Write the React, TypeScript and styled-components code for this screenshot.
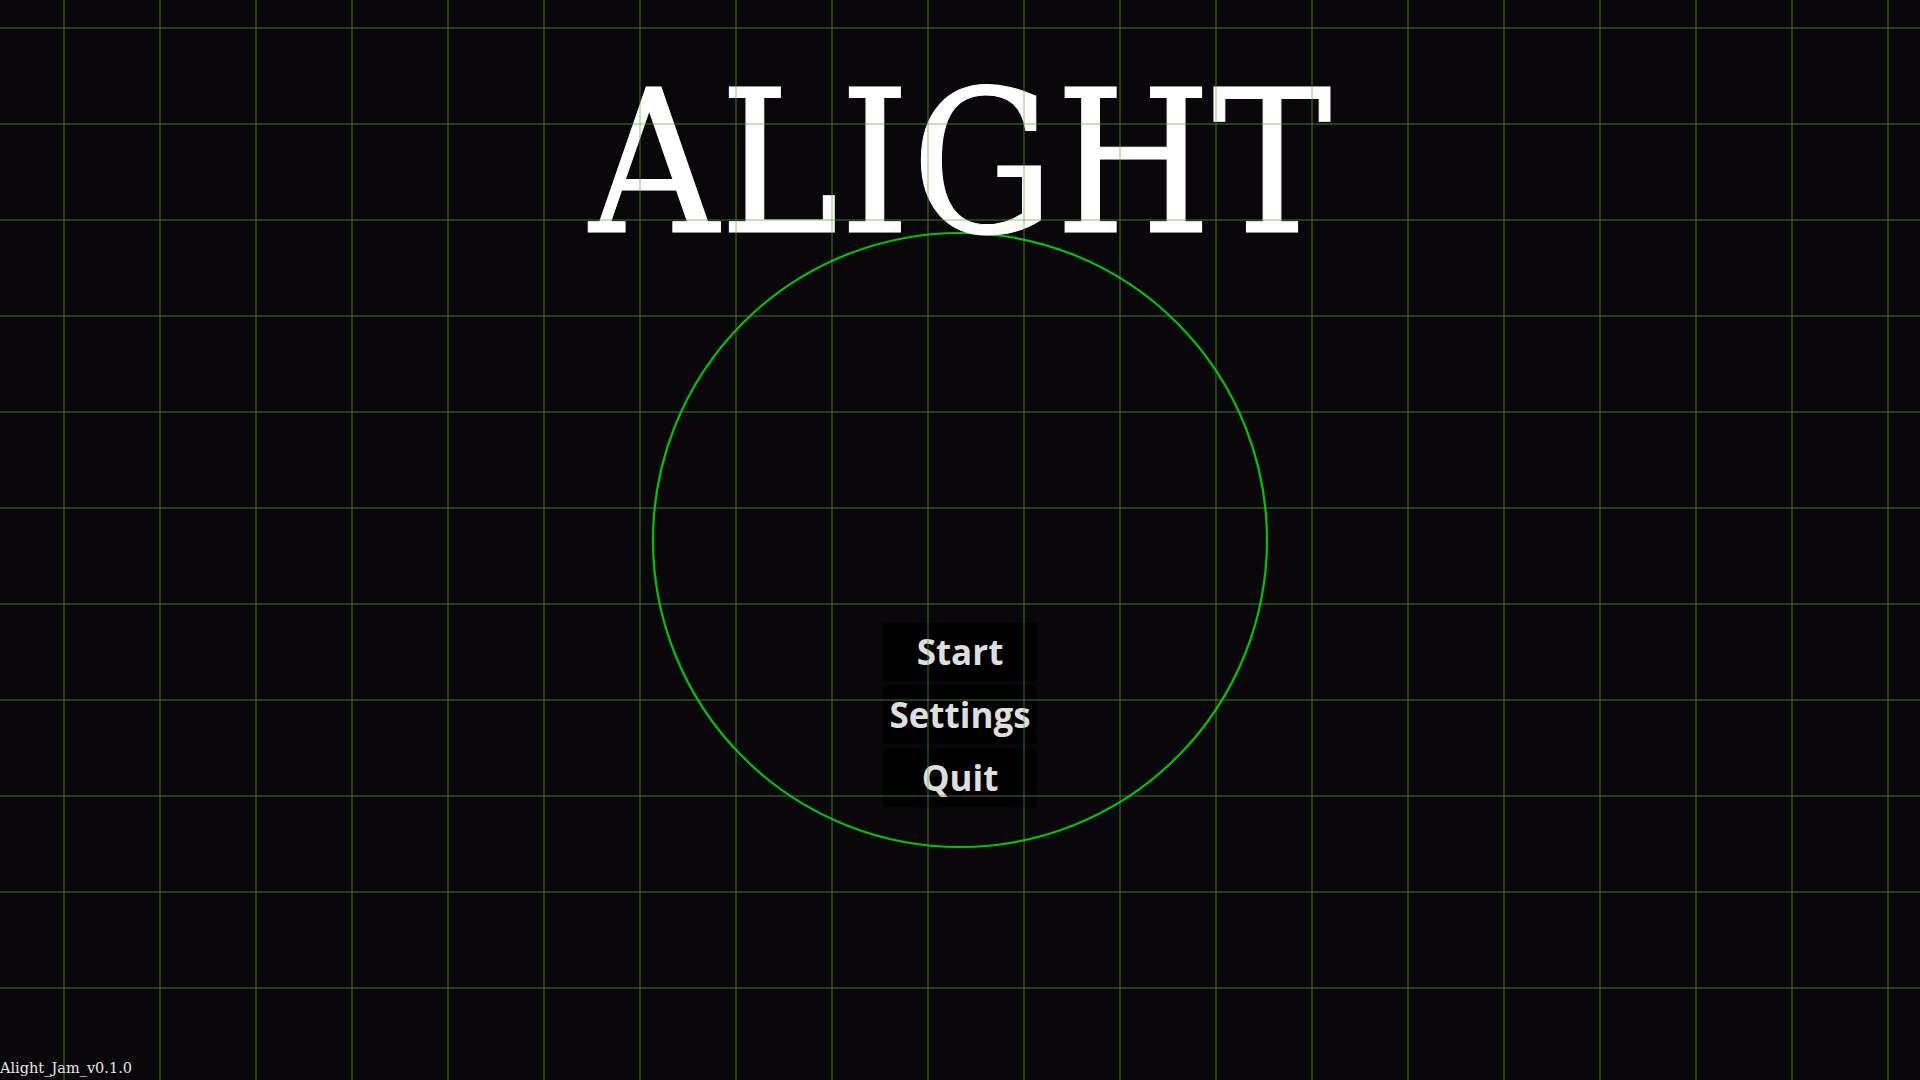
import React from 'react';
import styled, {createGlobalStyle} from 'styled-components';

const GlobalStyle = createGlobalStyle`
  html, body {
    margin: 0;
    padding: 0;
    background-color: #0a070b;
    overflow: hidden;
  }
`;

const menuItems = ['Start', 'Settings', 'Quit'];

const App = () => {
    return (
        <>
            <GlobalStyle/>
            <Stage>
                <Ring viewBox="0 0 620 620" width={620} height={620}>
                    <circle cx="310" cy="310" r="307" fill="none" stroke="#00c400" strokeWidth="2.2"/>
                </Ring>
                <Title>ALIGHT</Title>
                <Menu>
                    {menuItems.map((item) => (
                        <MenuButton key={item}>{item}</MenuButton>
                    ))}
                </Menu>
                <Version>Alight_Jam_v0.1.0</Version>
                <GridOverlay/>
            </Stage>
        </>
    );
};

const Stage = styled.div`
  width: 100vw;
  height: 100vh;
  display: grid;
  grid-template: 1fr / 1fr;
  place-items: center;
  background-color: #0a070b;
  position: relative;

  & > * {
    grid-area: 1 / 1;
  }
`;

const Ring = styled.svg`
  display: block;
  place-self: center;
`;

const Title = styled.h1`
  align-self: start;
  margin: 64px 0 0;
  padding-left: 2px;
  font-family: "DejaVu Serif Condensed", "DejaVu Serif", serif;
  font-stretch: condensed;
  font-weight: normal;
  font-size: 199px;
  line-height: 1;
  letter-spacing: 1px;
  color: #ffffff;
  -webkit-text-stroke: 1px #ffffff;
  z-index: 1;
`;

const Menu = styled.div`
  align-self: start;
  margin-top: 622px;
  display: flex;
  flex-direction: column;
  gap: 4px;
  z-index: 1;
`;

const MenuButton = styled.div`
  width: 154px;
  height: 59px;
  display: flex;
  align-items: center;
  justify-content: center;
  background-color: #000000;
  border-radius: 3px;
  font-family: "Open Sans", "Noto Sans", sans-serif;
  font-weight: 700;
  font-size: 35px;
  color: #dedede;
  cursor: pointer;
`;

const Version = styled.div`
  align-self: end;
  justify-self: start;
  margin-bottom: 5px;
  font-family: "DejaVu Serif", serif;
  font-size: 14.5px;
  line-height: 1;
  color: #e8e8e8;
  z-index: 1;
`;

const GridOverlay = styled.div`
  position: absolute;
  inset: 0;
  pointer-events: none;
  z-index: 2;
  background-image: linear-gradient(to right, rgba(88, 170, 48, 0.34) 0 2px, transparent 2px),
  linear-gradient(to bottom, rgba(88, 170, 48, 0.34) 0 2px, transparent 2px);
  background-size: 96px 96px;
  background-position: 63px 27px;
`;

export default App;
